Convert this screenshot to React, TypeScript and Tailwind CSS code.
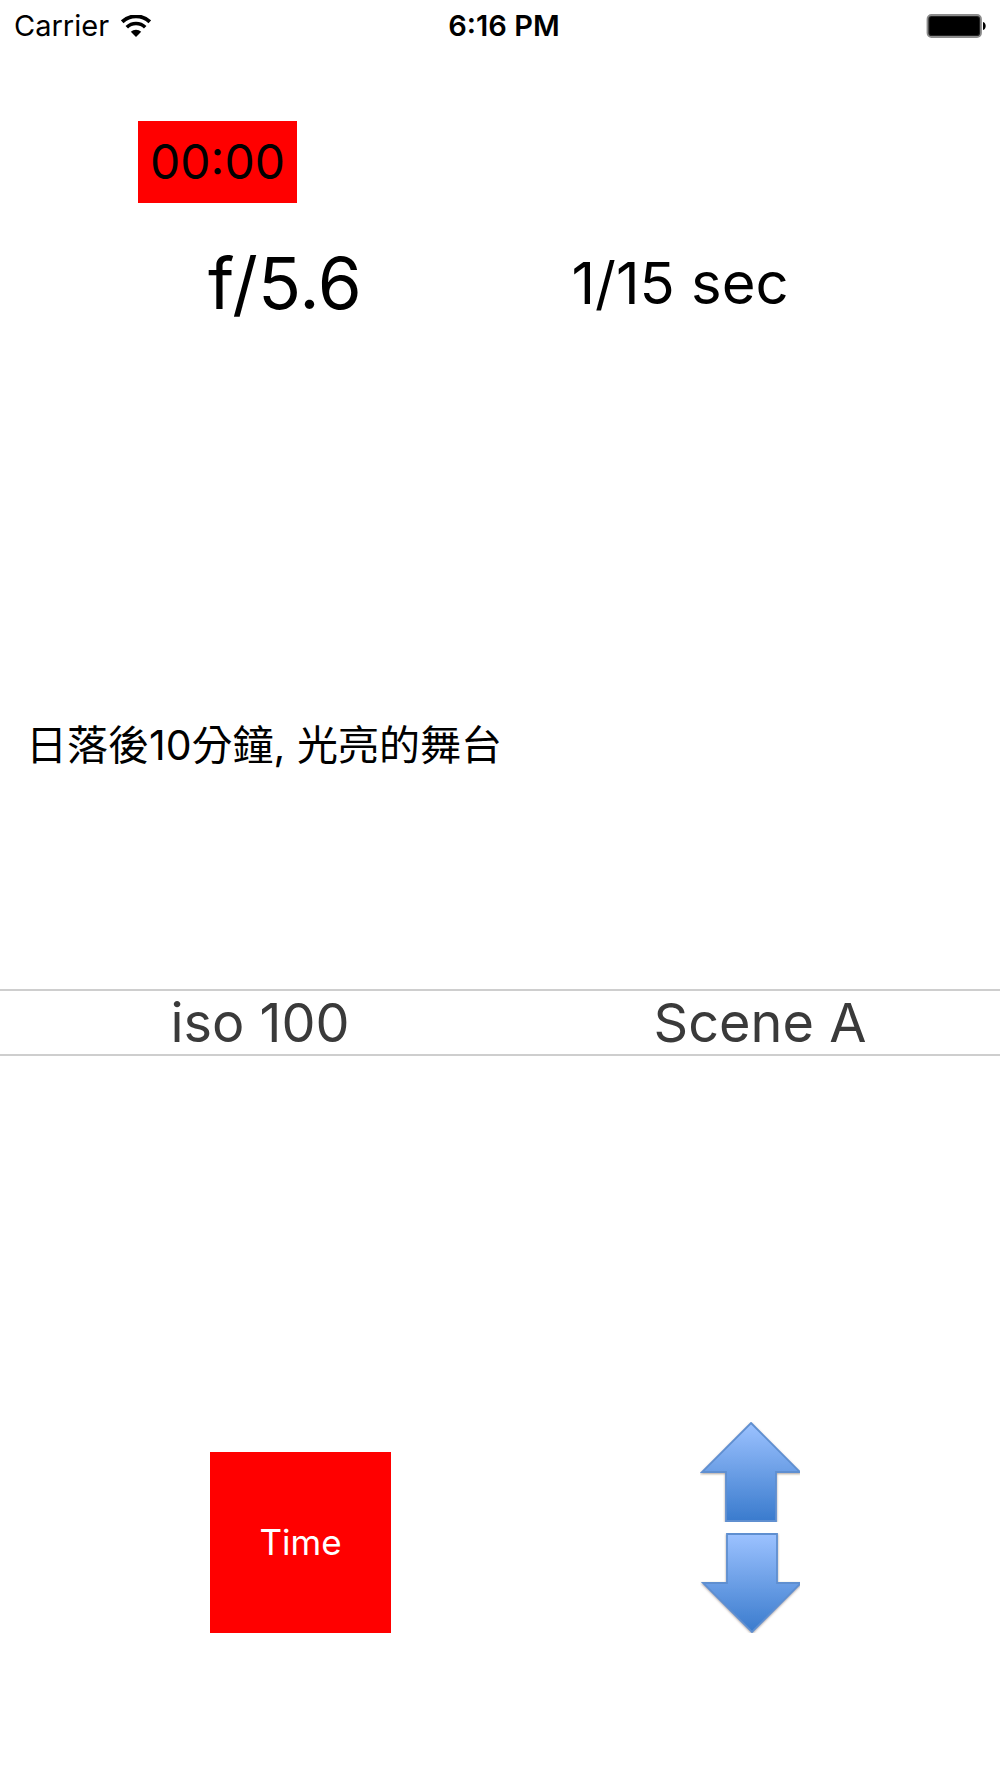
import { useState } from "react";

const isoValues = ["iso 100", "iso 200", "iso 400", "iso 800"];
const scenes = ["Scene A", "Scene B", "Scene C"];

function WifiIcon() {
  return (
    <svg viewBox="0 0 30 22" className="h-[22px] w-[30px]" aria-label="Wi-Fi">
      <path d="M1.2 6.8 A20 20 0 0 1 28.8 6.8" fill="none" stroke="#000" strokeWidth="3.8" />
      <path d="M5.8 12.2 A13.2 13.2 0 0 1 24.2 12.2" fill="none" stroke="#000" strokeWidth="3.6" />
      <path d="M15 22 L9.8 16.8 A7.4 7.4 0 0 1 20.2 16.8 Z" fill="#000" />
    </svg>
  );
}

function BatteryIcon() {
  return (
    <svg viewBox="0 0 60 24" className="h-6 w-[60px]" aria-label="Battery full">
      <rect x="1.5" y="1" width="53.5" height="22" rx="4" fill="#222" stroke="#8c8c8c" strokeWidth="1.8" />
      <rect x="3.5" y="3" width="49.5" height="18" rx="2" fill="#000" />
      <path d="M57 8 C60.6 9 60.6 15 57 16 Z" fill="#000" />
    </svg>
  );
}

function ArrowIcon({ down = false }: { down?: boolean }) {
  const id = down ? "arrow-down" : "arrow-up";
  return (
    <svg viewBox="0 0 100 100" className="block size-[100px]" aria-hidden="true">
      <defs>
        <linearGradient id={id} x1="0" y1="0" x2="0" y2="1">
          <stop offset="0" stopColor="#9cc2ff" />
          <stop offset="1" stopColor="#3a7bcd" />
        </linearGradient>
        <filter id={`${id}-shadow`} x="-10%" y="-10%" width="120%" height="120%">
          <feDropShadow dx="0" dy="1" stdDeviation="1" floodColor="#5a4636" floodOpacity="0.5" />
        </filter>
      </defs>
      <path
        d={
          down
            ? "M27 1 H77 V50 H101 L52 99 L3 50 H27 Z"
            : "M51 1 L100 50 H76 V99 H26 V50 H2 Z"
        }
        fill={`url(#${id})`}
        stroke="#5f8fd0"
        strokeWidth="1.8"
        filter={`url(#${id}-shadow)`}
      />
    </svg>
  );
}

function Wheel({ label, options }: { label: string; options: string[] }) {
  const [value, setValue] = useState(options[0]);
  return (
    <select
      aria-label={label}
      value={value}
      onChange={(e) => setValue(e.target.value)}
      className="h-[63px] w-full appearance-none bg-transparent text-center text-[54px] leading-[63px] text-[#3a3a3a] [text-align-last:center]"
    >
      {options.map((option) => (
        <option key={option}>{option}</option>
      ))}
    </select>
  );
}

export default function App() {
  return (
    <div className="min-h-screen bg-white pb-36 font-['Inter','Noto_Sans_CJK_TC',sans-serif] text-black">
      <header className="grid h-[51px] grid-cols-[1fr_auto_1fr] items-center px-[14px] text-[29px]">
        <div className="flex items-center gap-3">
          <span>Carrier</span>
          <WifiIcon />
        </div>
        <span className="pl-2 font-semibold">6:16 PM</span>
        <div className="flex justify-end">
          <BatteryIcon />
        </div>
      </header>

      <main>
        <div className="mt-[70px] ml-[13.8%] flex h-[82px] w-[159px] items-center justify-center bg-[#ff0000] text-[48px]">
          00:00
        </div>

        <div className="mt-9 flex h-[88px] items-center">
          <div className="w-[57%] text-center text-[71px]">f/5.6</div>
          <div className="w-[22%] text-center text-[58px] whitespace-nowrap">1/15 sec</div>
        </div>

        <p className="mt-[388px] pl-[26px] text-[41px] leading-[60px]">日落後10分鐘, 光亮的舞台</p>

        <div className="mt-[214px] grid grid-cols-[52%_48%] border-y-2 border-[#cecece]">
          <Wheel label="ISO" options={isoValues} />
          <Wheel label="Scene" options={scenes} />
        </div>

        <div className="mt-[366px] flex items-end">
          <div className="w-[70%] pl-[21%]">
            <button type="button" className="block size-[181px] bg-[#ff0000] text-[35px] text-white">
              Time
            </button>
          </div>
          <div className="flex flex-col gap-[11px]">
            <button type="button" aria-label="Increase">
              <ArrowIcon />
            </button>
            <button type="button" aria-label="Decrease">
              <ArrowIcon down />
            </button>
          </div>
        </div>
      </main>
    </div>
  );
}
